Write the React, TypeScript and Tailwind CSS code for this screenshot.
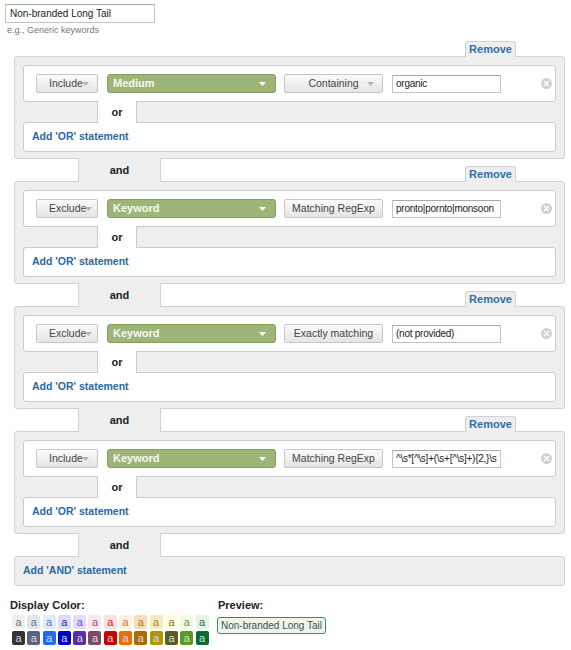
import React from "react"

type Rule = {
  mode: string
  dim: string
  match: string
  arrow?: boolean
  value: string
}

const RULES: Rule[] = [
  { mode: "Include", dim: "Medium", match: "Containing", arrow: true, value: "organic" },
  { mode: "Exclude", dim: "Keyword", match: "Matching RegExp", value: "pronto|pornto|monsoon" },
  { mode: "Exclude", dim: "Keyword", match: "Exactly matching", value: "(not provided)" },
  { mode: "Include", dim: "Keyword", match: "Matching RegExp", value: "^\\s*[^\\s]+(\\s+[^\\s]+){2,}\\s" },
]

const LIGHT = [
  ["#eeeeee", "#707070"],
  ["#dee3ec", "#6b7590"],
  ["#e0eaff", "#4a78f0"],
  ["#dcdcfa", "#2424c0"],
  ["#e3dcf8", "#7050b8"],
  ["#fde4f0", "#a05070"],
  ["#ffe0e0", "#cc2020"],
  ["#ffefe0", "#e07020"],
  ["#fbdcb8", "#b87010"],
  ["#f6ebbe", "#a08a10"],
  ["#ffffd8", "#707040"],
  ["#f2fae6", "#60a030"],
  ["#e8f2e8", "#207040"],
]

const DARK = [
  "#333333",
  "#5b6579",
  "#1e6cfc",
  "#0000c8",
  "#5a2ca8",
  "#7d4b63",
  "#cc0000",
  "#ee6c00",
  "#ae6a00",
  "#b09600",
  "#5a5c2c",
  "#5a9a1e",
  "#0b6a32",
]

function Caret({ color }: { color: string }) {
  return (
    <svg width="7" height="4" viewBox="0 0 7 4" className="absolute top-1/2 -translate-y-1/2">
      <path d="M0 0h7L3.5 4z" fill={color} />
    </svg>
  )
}

function GrayButton({ label, width, arrow }: { label: string; width: string; arrow?: boolean }) {
  return (
    <div
      className={`relative flex h-[19px] items-center justify-center rounded-[2px] border border-[#c6c6c6] bg-linear-to-b from-[#fbfbfb] to-[#e4e4e4] text-[10.5px] text-[#444] ${width}`}
    >
      <span>{label}</span>
      {arrow && (
        <span className="absolute right-[15px] top-1/2">
          <Caret color="#b4b4b4" />
        </span>
      )}
    </div>
  )
}

function ClearIcon() {
  return (
    <svg width="11" height="11" viewBox="0 0 11 11">
      <circle cx="5.5" cy="5.5" r="5.5" fill="#d2d2d2" />
      <path d="M3.5 3.5l4 4M7.5 3.5l-4 4" stroke="#fff" strokeWidth="1.4" strokeLinecap="round" />
    </svg>
  )
}

function RemoveTab() {
  return (
    <div className="relative z-10 -mb-px mr-[49px] flex h-[16px] w-[51px] items-center justify-center self-end rounded-t-[3px] border-x border-t border-[#d2d2d2] bg-[#eeeeee] text-[11px] font-bold text-[#2f6fa8]">
      Remove
    </div>
  )
}

function AndRow({ remove }: { remove: boolean }) {
  return (
    <div className="flex h-[22px]">
      <div className="w-[64px]" />
      <div className="relative z-10 -my-px flex w-[83px] items-center justify-center border-x border-[#d2d2d2] bg-[#eeeeee] text-[11px] font-bold text-[#222]">
        and
      </div>
      <div className="flex-1" />
      {remove && <RemoveTab />}
    </div>
  )
}

function RuleBlock({ rule }: { rule: Rule }) {
  return (
    <div className="rounded-[3px] border border-[#d2d2d2] bg-[#eeeeee] px-[8px] pb-[6px] pt-[8px]">
      <div className="flex h-[37px] items-center rounded-[3px] border border-[#cccccc] bg-white pl-[12px]">
        <div className="relative flex h-[19px] w-[62px] items-center rounded-[2px] border border-[#c6c6c6] bg-linear-to-b from-[#fbfbfb] to-[#e4e4e4] pl-[12px] text-[10.5px] text-[#444]">
          <span>{rule.mode}</span>
          <span className="relative -ml-[1px] w-[8px] self-stretch">
            <Caret color="#b4b4b4" />
          </span>
        </div>
        <div className="relative ml-[9px] flex h-[19px] w-[169px] items-center rounded-[3px] border border-[#819f5e] bg-[#9db678] pl-[5px] text-[11px] font-bold text-[#f6f9f0]">
          {rule.dim}
          <span className="absolute right-[16px] top-1/2">
            <Caret color="#ffffff" />
          </span>
        </div>
        <div className="ml-[8px]">
          <GrayButton label={rule.match} width="w-[99px]" arrow={rule.arrow} />
        </div>
        <div className="ml-[9px] flex h-[18px] w-[109px] items-center overflow-hidden whitespace-nowrap border border-[#c3c3c3] border-t-[#a8a8a8] bg-white pl-[3px] text-[10px] tracking-[-0.25px] text-[#222]">
          {rule.value}
        </div>
        <div className="ml-auto mr-[3px] flex">
          <ClearIcon />
        </div>
      </div>
      <div className="relative z-10 -my-px ml-[74px] flex h-[22px] w-[40px] items-center justify-center border-x border-[#cccccc] bg-white text-[11px] font-bold text-[#222]">
        or
      </div>
      <div className="flex h-[30px] items-center rounded-[3px] border border-[#cccccc] bg-white pl-[8px] text-[10.5px] font-bold text-[#2a69a0]">
        Add 'OR' statement
      </div>
    </div>
  )
}

export default function App() {
  return (
    <div className="min-h-[650px] bg-white pt-[4px] font-['Liberation_Sans',Arial,sans-serif] text-[#222]">
      <div className="ml-[5px] flex h-[19px] w-[150px] items-center border border-[#c3c3c3] border-t-[#a8a8a8] pl-[4px] text-[10px] text-[#222]">
        Non-branded Long Tail
      </div>
      <div className="ml-[7px] mt-[2px] text-[9px] leading-[11px] text-[#777]">e.g., Generic keywords</div>

      <div className="ml-[14px] mt-[5px] w-[551px]">
        {RULES.map((rule, i) => (
          <React.Fragment key={i}>
            {i === 0 ? (
              <div className="flex h-[15px]">
                <div className="flex-1" />
                <RemoveTab />
              </div>
            ) : (
              <AndRow remove />
            )}
            <RuleBlock rule={rule} />
          </React.Fragment>
        ))}
        <AndRow remove={false} />
        <div className="flex h-[30px] items-center rounded-[3px] border border-[#d2d2d2] bg-[#eeeeee] pl-[8px] text-[10.5px] font-bold text-[#2a69a0]">
          Add 'AND' statement
        </div>
      </div>

      <div className="ml-[10px] mt-[13px] flex">
        <div className="w-[207px]">
          <div className="text-[11px] font-bold leading-[13px] text-[#222]">Display Color:</div>
          <div className="ml-[2px] mt-[3px] grid grid-cols-[repeat(13,13px)] gap-x-[2.3px] gap-y-[2px]">
            {LIGHT.map(([bg, fg], i) => (
              <div
                key={"l" + i}
                className="flex h-[14px] w-[13px] items-end justify-center rounded-[2px] text-[11px] leading-[13px]"
                style={{ backgroundColor: bg, color: fg }}
              >
                a
              </div>
            ))}
            {DARK.map((bg, i) => (
              <div
                key={"d" + i}
                className="flex h-[14px] w-[13px] items-end justify-center rounded-[2px] text-[11px] leading-[13px] text-[#d8dce4]"
                style={{ backgroundColor: bg }}
              >
                a
              </div>
            ))}
          </div>
        </div>
        <div>
          <div className="ml-[1px] text-[11px] font-bold leading-[13px] text-[#222]">Preview:</div>
          <div className="mt-[5px] flex h-[17px] items-center rounded-[3px] border border-[#3d8b4f] bg-[#eef5ee] px-[3px] text-[10px] text-[#3b5245]">
            Non-branded Long Tail
          </div>
        </div>
      </div>
    </div>
  )
}
